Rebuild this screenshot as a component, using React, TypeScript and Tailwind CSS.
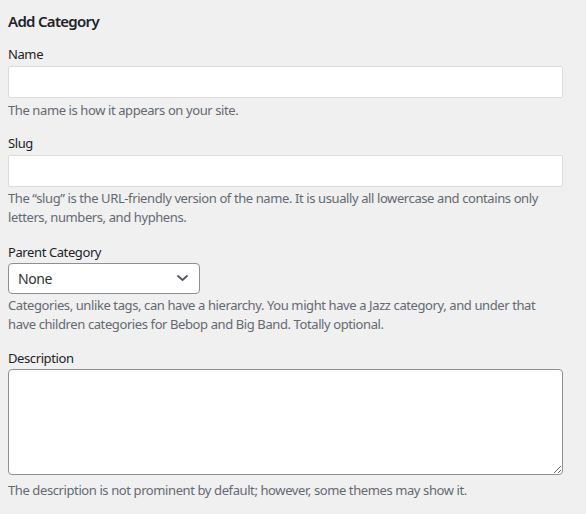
import React from "react";

const Field = ({ label, children, help, className }: { label: string; children: React.ReactNode; help: React.ReactNode; className?: string }) => (
  <div className={className}>
    <label className="block text-[13px] leading-[19px] text-[#1d2327] mb-[2px]">{label}</label>
    {children}
    {help}
  </div>
);

export default function App() {
  return (
    <div
      className="min-h-[514px] w-full bg-[#f0f0f1] pl-[8px] pr-[24px] pt-[11px] text-[#3c434a] tracking-[-0.4px]"
      style={{ fontFamily: '"Noto Sans", "Open Sans", sans-serif' }}
    >
      <h2 className="text-[15px] leading-[20px] font-semibold text-[#1d2327] tracking-[-0.7px] mb-[14px]">Add Category</h2>

      <form className="flex flex-col">
        {/* name */}
        <Field
          label="Name"
          className="mb-[14px]"
          help={<p className="mt-[3px] text-[13px] leading-[19px] text-[#646970]">The name is how it appears on your site.</p>}
        >
          <input type="text" className="block w-[555px] h-[32px] bg-white border border-[#dcdcde] rounded-[2px] px-2 text-[14px] outline-none" />
        </Field>

        {/* slug */}
        <Field
          label="Slug"
          className="mb-[16px]"
          help={
            <p className="mt-[2px] text-[13px] leading-[19px] text-[#646970]">
              The “slug” is the URL-friendly version of the name. It is usually all lowercase and contains only letters, numbers, and hyphens.
            </p>
          }
        >
          <input type="text" className="block w-[555px] h-[32px] bg-white border border-[#dcdcde] rounded-[2px] px-2 text-[14px] outline-none" />
        </Field>

        {/* parent */}
        <Field
          label="Parent Category"
          className="mb-[15px]"
          help={
            <p className="mt-[2px] text-[13px] leading-[19px] text-[#646970]">
              Categories, unlike tags, can have a hierarchy. You might have a Jazz category, and under that have children categories for Bebop and Big Band. Totally optional.
            </p>
          }
        >
          <div className="relative w-[192px] h-[31px] -mt-[1px]">
            <select className="appearance-none block w-full h-full bg-white border border-[#8c8f94] rounded-[4px] pl-[9px] pr-6 text-[14px] text-[#2c3338] outline-none">
              <option>None</option>
            </select>
            <svg className="absolute right-[11px] top-[11px] pointer-events-none" width="13" height="8" viewBox="0 0 13 8" fill="none">
              <path d="M1.5 1.5 L6.5 6 L11.5 1.5" stroke="#50575e" strokeWidth="1.8" />
            </svg>
          </div>
        </Field>

        {/* description */}
        <Field
          label="Description"
          help={
            <p className="mt-[6px] text-[13px] leading-[19px] text-[#646970]">
              The description is not prominent by default; however, some themes may show it.
            </p>
          }
        >
          <textarea className="block w-[555px] h-[106px] -mt-[1px] bg-white border border-[#8c8f94] rounded-[4px] px-2 py-1 text-[14px] outline-none" />
        </Field>
      </form>
    </div>
  );
}
